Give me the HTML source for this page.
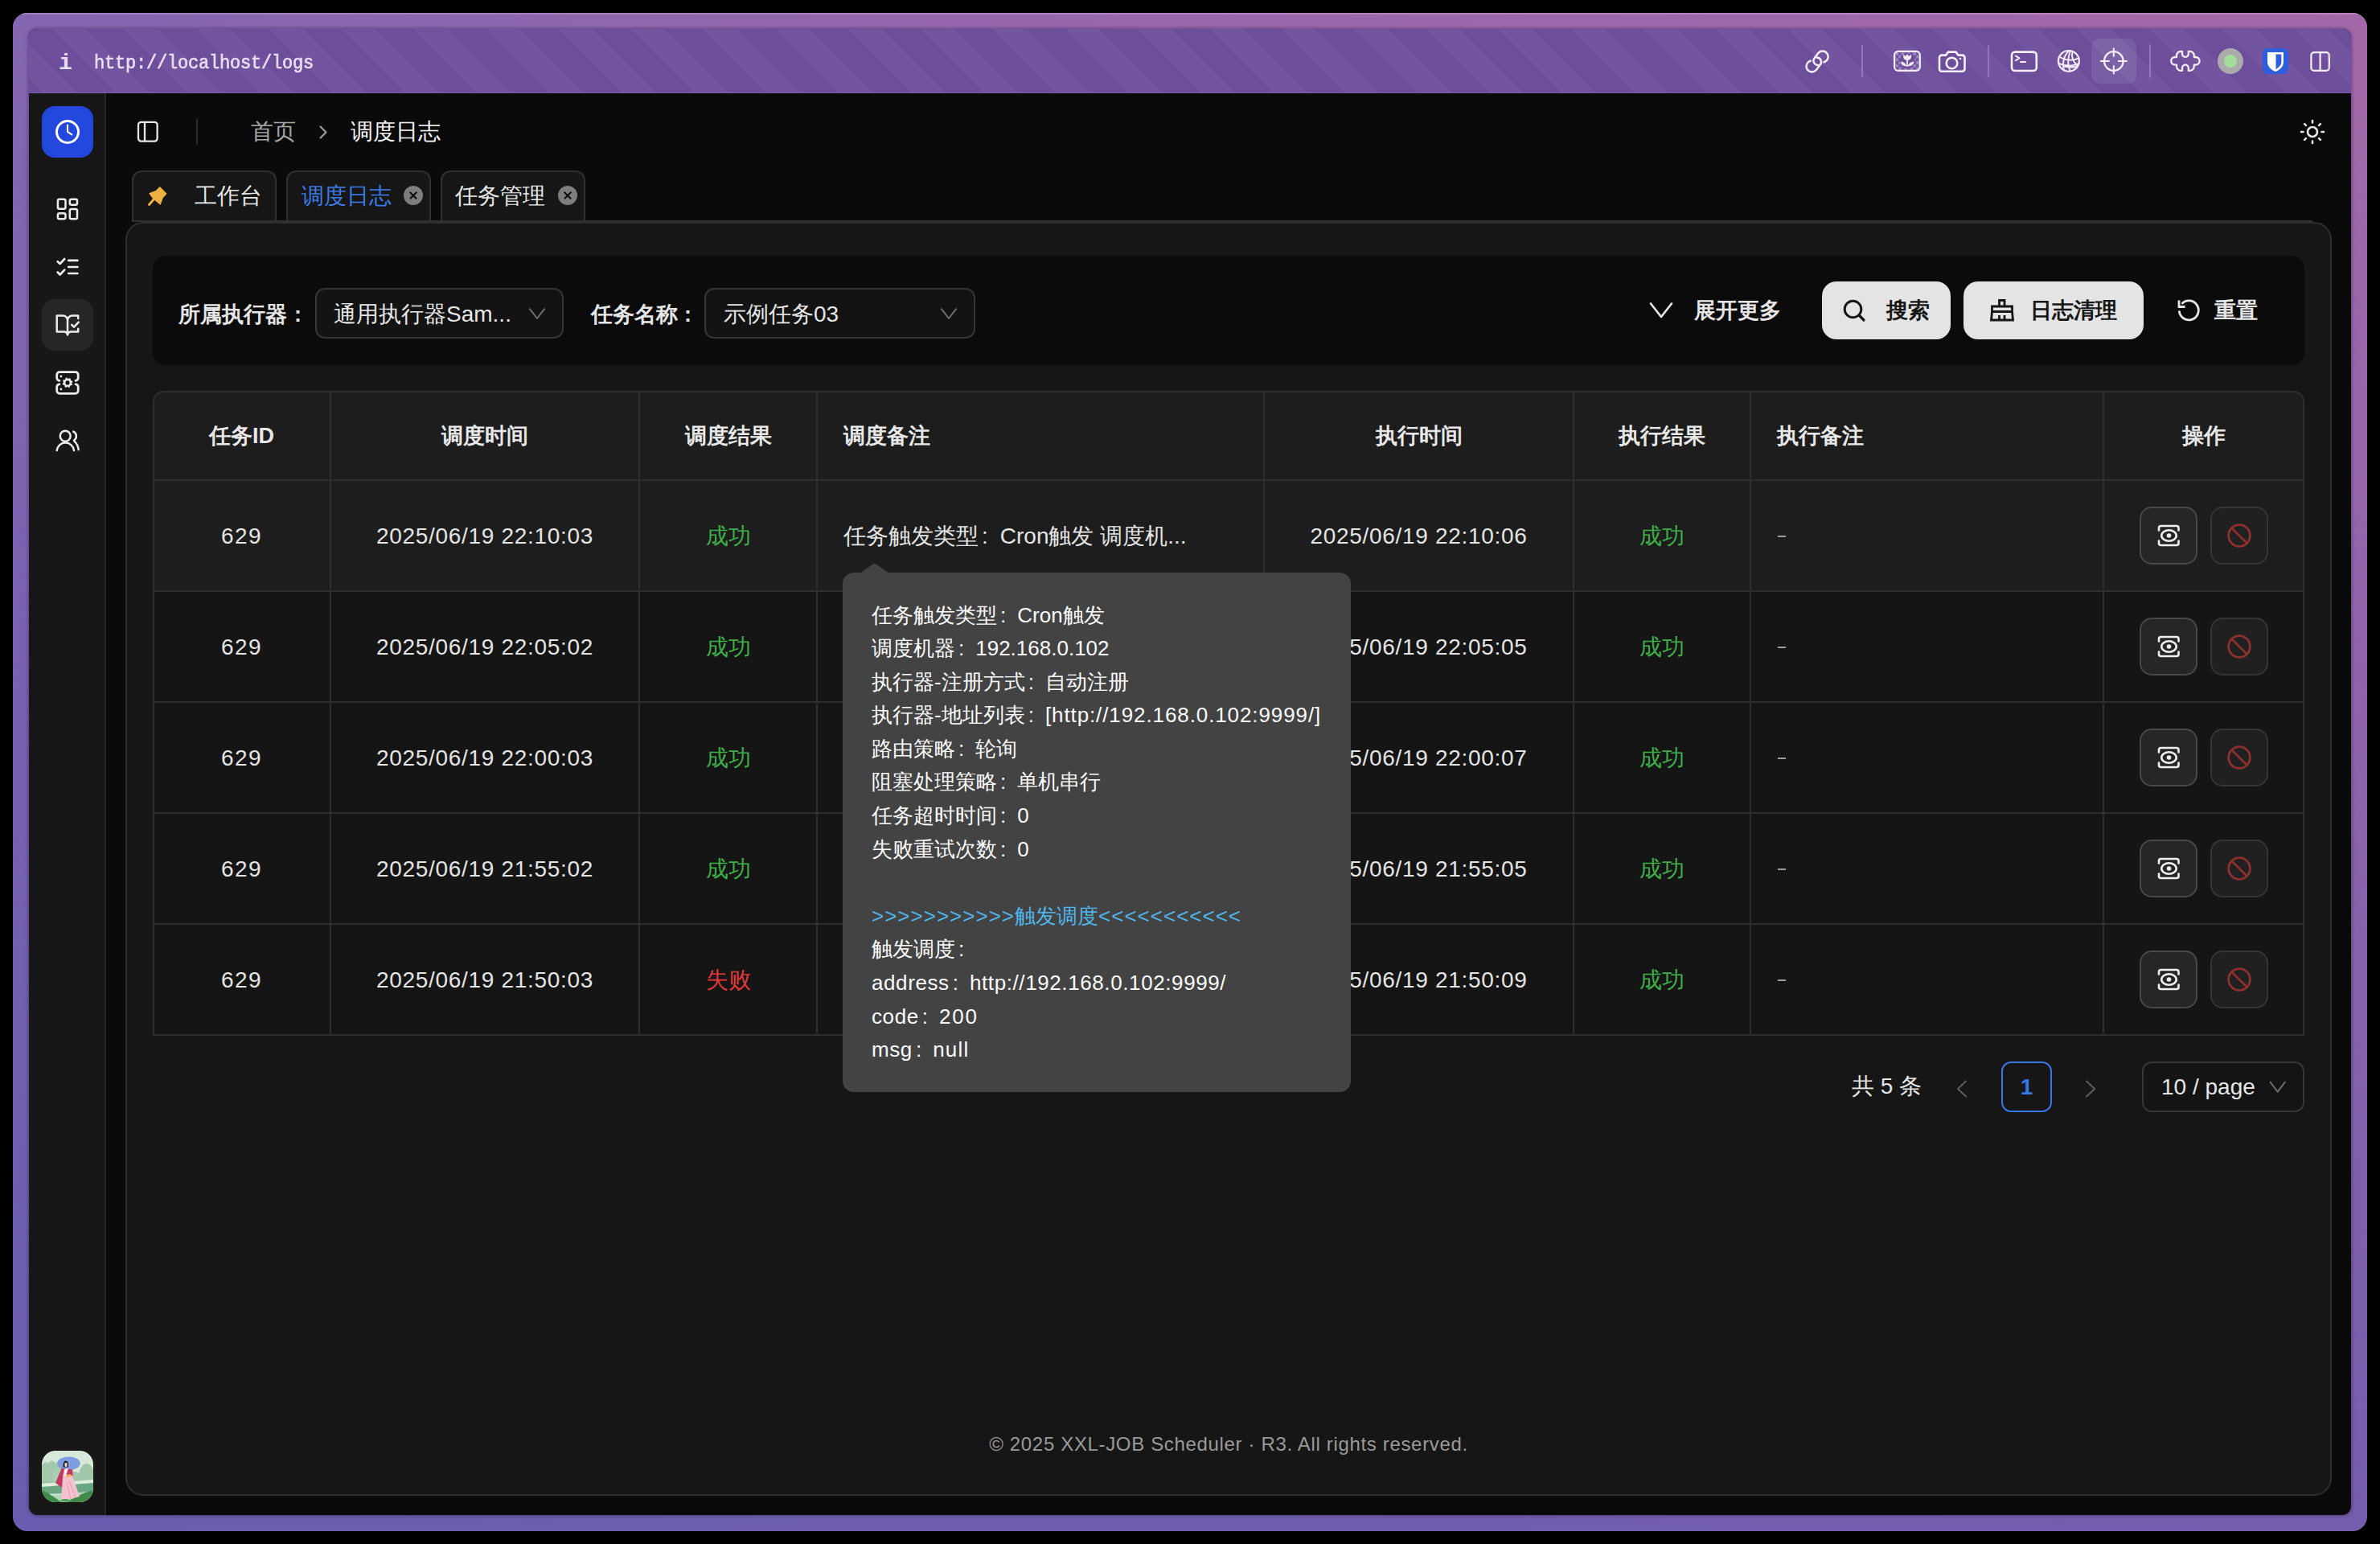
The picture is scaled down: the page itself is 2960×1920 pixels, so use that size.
<!DOCTYPE html>
<html><head><meta charset="utf-8">
<style>
*{box-sizing:border-box;margin:0;padding:0}
html,body{width:2960px;height:1920px;overflow:hidden;background:#000;font-family:"Liberation Sans",sans-serif;color:#e8e8e8}
.a{position:absolute}
#frame{left:16px;top:16px;width:2928px;height:1888px;border-radius:18px;background:linear-gradient(to right,#6a5db0,#755eae);overflow:hidden}
#frame::after{content:"";position:absolute;left:0;top:0;right:0;height:2px;border-radius:18px 18px 0 0;background:rgba(255,255,255,0.18)}
#frame::before{content:"";position:absolute;inset:0;background:linear-gradient(to right,#8466b0,#9a67ac 50%,#a468a9);-webkit-mask-image:linear-gradient(to bottom,#000,rgba(0,0,0,0));mask-image:linear-gradient(to bottom,#000,rgba(0,0,0,0))}
#win{left:0;top:0;width:2960px;height:1920px;clip-path:inset(36px 36px 36px 36px round 11px);background:#0a0a0a}
#title{left:36px;top:36px;width:2888px;height:80px;background:repeating-linear-gradient(45deg,#72549f 12.7px,#72549f 42.4px,#6c4e9b 42.4px,#6c4e9b 76.3px);border-bottom:1px solid #7a5dab}
.url{left:117px;top:59.5px;font-family:"Liberation Mono",monospace;font-size:22px;color:#e9def2;line-height:40px;letter-spacing:-0.2px;transform:scaleY(1.1);transform-origin:0 30px;-webkit-text-stroke:0.6px #e9def2}
.ii{left:73px;top:55px;font-family:"Liberation Mono",monospace;font-weight:bold;font-size:28px;color:#e9def2;line-height:48px}
#side{left:36px;top:116px;width:96px;height:1768px;background:#171717;border-right:2px solid #262626}
.logo{left:52px;top:132px;width:64px;height:64px;border-radius:16px;background:#2447dd}
.navbg{left:52px;top:372px;width:64px;height:64px;border-radius:16px;background:#262626}
.ico{position:absolute}
.card{left:156px;top:276px;width:2744px;height:1584px;border:2px solid #2e2e2e;border-radius:22px;background:#161616}
.tabline{left:164px;top:274px;width:2712px;height:2px;background:#303030}
.tab{top:212px;width:180px;height:64px;border:2px solid #303030;border-bottom:none;border-radius:12px 12px 0 0;background:#161616;font-size:27px;line-height:60px}
.filter{left:190px;top:318px;width:2676px;height:136px;border-radius:16px;background:#0b0b0b}
.lbl{font-size:27px;font-weight:bold;color:#e6e6e6;line-height:40px}
.sel{top:358px;height:63px;border:2px solid #363636;border-radius:12px;background:#131313;font-size:28px;line-height:62px;color:#e6e6e6}
.btn{top:350px;height:72px;border-radius:18px;background:#e4e4e4;color:#1a1a1a;font-size:27px;font-weight:bold;line-height:72px}
#tbl{left:190px;top:486px;width:2676px;height:802px;border:2px solid #2e2e2e;border-radius:14px 14px 0 0;overflow:hidden;background:#151515}
.th{top:0;height:110px;line-height:108px;font-size:27px;font-weight:bold;color:#e8e8e8;text-align:center}
.vl{top:0;width:2px;height:802px;background:#2e2e2e}
.hl{left:0;width:2676px;height:2px;background:#2e2e2e}
.td{height:138px;line-height:138px;font-size:28px;color:#e4e4e4;text-align:center}
.ok{color:#3fae49}.bad{color:#e0393a}
.opb{width:72px;height:72px;border-radius:15px;border:2px solid #484848;background:#262626}
.tip{left:1048px;top:712px;width:632px;height:646px;border-radius:14px;background:#434343;padding:32.5px 0 0 36px;font-size:26px;line-height:41.6px;color:#fafafa}
.foot{left:156px;top:1776px;width:2744px;text-align:center;font-size:24px;letter-spacing:0.66px;color:#9a9a9a;line-height:40px}

.avatar{left:52px;top:1804px;width:64px;height:64px;border-radius:16px;overflow:hidden;background:linear-gradient(#d5e8d5 0%,#b9d9c0 35%,#8fbf98 62%,#5f9f68 100%)}
.avatar div{position:absolute}
.av1{left:20px;top:6px;width:26px;height:12px;border-radius:13px 13px 2px 2px;background:#7d8fe0}
.av2{left:24px;top:14px;width:8px;height:10px;border-radius:4px;background:#2a2424}
.av3{left:18px;top:22px;width:26px;height:40px;border-radius:8px 8px 4px 4px;background:linear-gradient(90deg,#b8325e 0%,#e9a9bf 45%,#f3c6d3 70%,#c4426e 100%)}
.av4{left:0;top:48px;width:64px;height:16px;background:#3f8a48;opacity:.6}
.av5{left:26px;top:30px;width:14px;height:32px;background:#f5c8d4}
.crumb1{left:312px;top:144px;font-size:28px;line-height:40px;color:#a8a8a8}
.crumb2{left:436px;top:144px;font-size:28px;line-height:40px;color:#f4f4f4}
.tabtxt{top:224px;font-size:28px;line-height:40px;color:#e6e6e6}
.tclose{top:231px;width:24px;height:24px;border-radius:12px;background:#7d7d7d}
.tclose::before,.tclose::after{content:"";position:absolute;left:6px;top:11.2px;width:12px;height:1.6px;background:#0e0e0e;transform:rotate(45deg)}
.tclose::after{transform:rotate(-45deg)}

.dt{letter-spacing:0.7px}
.pg{font-size:28px;line-height:40px;color:#e6e6e6}
.pbox{left:2489px;top:1320px;width:63px;height:63px;border:2px solid #3577e5;border-radius:12px}
.psel{left:2664px;top:1320px;width:202px;height:63px;border:2px solid #363636;border-radius:12px;background:#141414}

.cl{margin:0 14px 0 4px}
.cl2{margin:0 15px 0 4px}
.lt{letter-spacing:0.6px}
.ar{letter-spacing:1px}
</style></head><body>
<div id="frame" class="a"></div>
<div class="a" style="left:36px;top:36px;width:2888px;height:1848px;border-radius:11px;box-shadow:0 0 4px 1px rgba(20,10,40,0.35)"></div>
<div id="win" class="a">
  <div id="title" class="a"></div>
  <div class="a ii">i</div>
  <div class="a url">http://localhost/logs</div>
  <svg class="a" style="left:0;top:0" width="2960" height="120" viewBox="0 0 2960 120" fill="none" stroke="#f4eefa" stroke-width="2.6" stroke-linecap="round" stroke-linejoin="round">
    <defs>
      <pattern id="chk" x="2357.4" y="64.9" width="7.3" height="7.5" patternUnits="userSpaceOnUse">
        <rect x="0.3" y="0.3" width="3.1" height="3.2" fill="#ad9dd0" stroke="none"/><rect x="3.95" y="4.05" width="3.1" height="3.2" fill="#ad9dd0" stroke="none"/>
      </pattern>
    </defs>
    <!-- link -->
    <path d="M2268.5 77.3 L2271.65 75.45 A7 7 0 0 0 2261.75 65.55 L2257.1 71.6 A5.5 5.5 0 0 0 2261 81" stroke-width="2.5"/>
    <path d="M2251.7 75.6 L2248.55 77.55 A7 7 0 0 0 2258.45 87.45 L2263.4 80.9 A5.5 5.5 0 0 0 2259.5 71.5" stroke-width="2.5"/>
    <line x1="2316" y1="57" x2="2316" y2="95" stroke="#8f78c2" stroke-width="2"/>
    <!-- image -->
    <rect x="2357.4" y="64.9" width="29.2" height="21.9" fill="url(#chk)" stroke="none" opacity="0.85"/>
    <ellipse cx="2372.1" cy="75.6" rx="9.6" ry="9.6" fill="#6c4e9b" stroke="none"/>
    <rect x="2356.1" y="63.9" width="31.7" height="23.9" rx="4.6" stroke-width="2.3"/>
    <path d="M2367.2 67.8 l2.5 2 l2.4 -2.2 l2.4 2.2 l2.5 -2 v3.2 a4.9 4 0 0 1 -9.8 0 z" fill="#f1ebf8" stroke="none"/>
    <rect x="2371.2" y="74" width="1.8" height="8.6" fill="#f1ebf8" stroke="none"/>
    <path d="M2371.4 82.4 C2370 78.2 2366.5 76.6 2363.8 76.9 C2364.4 80.2 2367 82.3 2371.4 82.4 z M2372.8 82.4 C2374.2 78.2 2377.7 76.6 2380.4 76.9 C2379.8 80.2 2377.2 82.3 2372.8 82.4 z" fill="#f1ebf8" stroke="none"/>
    <!-- camera -->
    <path d="M2415 68.6 h5 l3 -4 h9.5 l3 4 h5 a3 3 0 0 1 3 3 v14.2 a3 3 0 0 1 -3 3 h-25.5 a3 3 0 0 1 -3 -3 v-14.2 a3 3 0 0 1 3 -3z"/>
    <circle cx="2427.5" cy="78.5" r="6.8"/>
    <circle cx="2438" cy="73" r="1.3" fill="#f4eefa" stroke="none"/>
    <line x1="2473" y1="57" x2="2473" y2="95" stroke="#8f78c2" stroke-width="2"/>
    <!-- terminal -->
    <rect x="2502" y="64.6" width="30.8" height="23.4" rx="4"/>
    <path d="M2507 69.5 l4.5 2.8 l-4.5 2.8" stroke-width="2"/>
    <line x1="2513" y1="77" x2="2519" y2="77" stroke-width="2"/>
    <!-- globe -->
    <circle cx="2572.9" cy="75.9" r="12.9" stroke-width="2.2"/>
    <path d="M2573.2 63 C2569 67 2566 74 2566 80 C2566 83 2566.3 85 2566.8 87.5 M2575 63.3 C2573 68 2572 74 2572.3 80 C2572.5 83 2573.5 86 2574.8 88 M2577.6 64.3 C2576 70 2577 76 2584 82 M2561 70.5 C2566 73.5 2572 75 2578 74.5 C2580.5 74.2 2583 73.4 2585.5 72 M2560 78.5 C2564 80.5 2568 81.6 2574 81.7 C2578 81.6 2582 80.6 2585.5 78.8 M2567 82.5 C2572 83.5 2577 84 2582.5 83" stroke-width="1.9"/>
    <!-- crosshair -->
    <rect x="2601" y="48" width="56" height="56" rx="10" fill="rgba(255,255,255,0.09)" stroke="none"/>
    <circle cx="2628.8" cy="76" r="11.8" stroke-width="2.3"/>
    <path d="M2628.8 60.5 v9.5 M2628.8 82 v9.5 M2612.8 76 h10 M2634.8 76 h10" stroke-width="2.1"/>
    <line x1="2674" y1="56" x2="2674" y2="96" stroke="#8f78c2" stroke-width="2"/>
    <!-- puzzle -->
    <path d="M2707 71 V69.3 A5.5 5.5 0 0 1 2712.5 63.8 H2714 V66.9 A3.9 3.9 0 0 0 2721.8 66.9 V63.8 H2723.3 A5.5 5.5 0 0 1 2728.8 69.3 V71 H2730.8 A4.8 4.8 0 0 1 2730.8 80.6 H2728.8 V82.4 A5.5 5.5 0 0 1 2723.3 87.9 H2721.8 V84.5 A3.9 3.9 0 0 0 2714 84.5 V87.9 H2712.5 A5.5 5.5 0 0 1 2707 82.4 V80.6 H2705 A4.8 4.8 0 0 1 2705 71 Z" stroke-width="2.3"/>
    <circle cx="2774" cy="76" r="16" fill="#ababab" stroke="none"/>
    <circle cx="2774" cy="76" r="8" fill="#a4dc9b" stroke="none"/>
    <!-- bitwarden -->
    <rect x="2814" y="60" width="32" height="32" rx="6" fill="#2d5fdc" stroke="none"/>
    <path d="M2820 65 h20 v12 c0 6 -5 10 -10 12 c-5 -2 -10 -6 -10 -12z" fill="#fff" stroke="none"/>
    <path d="M2830.5 67.5 h6.8 v9.5 c0 4 -3 7 -6.8 9z" fill="#2d5fdc" stroke="none"/>
    <!-- split -->
    <rect x="2874.4" y="65.2" width="22.4" height="22.6" rx="3.6" stroke-width="2.2"/>
    <line x1="2885.6" y1="65.5" x2="2885.6" y2="87.5" stroke-width="2.2"/>
  </svg>

  <div id="side" class="a"></div>
  <div class="a logo"></div>
  <div class="a navbg"></div>

  <svg class="a" style="left:0;top:116px" width="140" height="1768" viewBox="0 116 140 1768" fill="none" stroke="#ececec" stroke-width="2.5" stroke-linecap="round" stroke-linejoin="round">
    <circle cx="84" cy="164" r="13.5" stroke="#fff" stroke-width="3"/>
    <path d="M84 155.5 v8.3 l5.3 3.6" stroke="#fff" stroke-width="2.1"/>
    <rect x="71.9" y="247.7" width="9.6" height="12.1" rx="2"/>
    <rect x="71.9" y="265.2" width="9.6" height="7" rx="2"/>
    <rect x="86.8" y="247.7" width="9.2" height="7" rx="2"/>
    <rect x="86.8" y="260" width="9.2" height="12.2" rx="2"/>
    <path d="M71.7 325.2 l2.9 2.9 l5.6 -6.1 M71.7 338.5 l2.9 3.1 l5.6 -6 M85.2 323.9 h11.2 M85.2 332 h11.2 M85.2 340 h11.2" stroke-width="2.7"/>
    <path d="M70.7 392.5 h7.5 a5.8 5.8 0 0 1 5.8 5.8 v18.2 a4.8 4.8 0 0 0 -4.8 -4 h-8.5 z M84 398.5 a6 6 0 0 1 6 -6 h7.2 v3.6 M97.2 408.8 v3.7 h-8.4 a4.8 4.8 0 0 0 -4.8 4" />
    <path d="M89.2 403.8 l2.8 2.8 l5.7 -5.9" stroke-width="2.6"/>
    <path d="M73.9 473.3 A3.2 3.2 0 0 1 70.7 470.1 V466 A3.4 3.4 0 0 1 74.1 462.6 H93.8 A3.4 3.4 0 0 1 97.2 466 V470.1 A3.2 3.2 0 0 1 94 473.3 M73.9 477.8 A3.2 3.2 0 0 0 70.7 481 V485.9 A3.4 3.4 0 0 0 74.1 489.3 H93.8 A3.4 3.4 0 0 0 97.2 485.9 V481 A3.2 3.2 0 0 0 94 477.8" stroke-width="2.8"/>
    <circle cx="75.9" cy="468" r="1.4" fill="#ececec" stroke="none"/><circle cx="75.9" cy="484" r="1.4" fill="#ececec" stroke="none"/>
    <circle cx="84" cy="475.9" r="3.9" stroke-width="2.6"/>
    <circle cx="84" cy="475.9" r="5.3" stroke-width="2" stroke-dasharray="2.1 2.06" stroke-linecap="butt" transform="rotate(12 84 475.9)"/>
    <circle cx="81.2" cy="542.3" r="6.45"/>
    <path d="M70.7 560.2 A10.7 10.7 0 0 1 92 560.2 M91.2 536.6 A6.3 6.3 0 0 1 92 547.6 M92.4 548.6 C95 551 97.3 555 97.6 559.2"/>
  </svg>
  <svg class="a" style="left:52px;top:1804px" width="64" height="64" viewBox="0 0 64 64">
    <defs><clipPath id="avc"><rect x="0" y="0" width="64" height="64" rx="17"/></clipPath></defs>
    <g clip-path="url(#avc)">
      <rect x="0" y="0" width="64" height="64" fill="#d7e9d8"/>
      <path d="M0 18 c2 -4 6 -5 8 -2 c1 -4 7 -5 9 0 c2 -3 6 -2 8 2 v20 h-25z" fill="#a3c9ad"/>
      <path d="M14 24 c2 -4 8 -4 10 0 v16 h-10z" fill="#a9ceb3"/>
      <path d="M36 28 c3 -3 8 -3 10 1 c1 -6 4 -12 9 -13 c5 0 8 4 9 8 v16 h-28z" fill="#a0c7aa"/>
      <path d="M0 38 h64 v-2 l-64 5z" fill="#9cc4a6"/>
      <path d="M0 41 L64 36 V40 L0 45z" fill="#dcefdf"/>
      <path d="M0 45 L64 40 V52 L0 54z" fill="#6aa683"/>
      <path d="M10 56 L64 50 V64 H10z" fill="#b4d6bc"/>
      <path d="M0 49 C8 52 16 58 24 64 H0z" fill="#3f8a49"/>
      <path d="M64 49 C52 52 40 58 31 64 H64z" fill="#3f8a49"/>
      <path d="M22 63 c2 -3 6 -4 10 -3 c3 1 3 3 2 4z" fill="#5aa065"/>
      <ellipse cx="33.5" cy="15.8" rx="14.3" ry="8.4" fill="#7f9de0"/>
      <path d="M26.6 20.5 c-0.5 -5 1 -8 3.2 -8 c2.3 0 3.6 3 3.1 8z" fill="#231e22"/>
      <rect x="28.5" y="15" width="3" height="5" rx="1.2" fill="#f0d3c9"/>
      <path d="M24.5 22 L38 23.3 L39.5 43 L24 45.5 L17 40 Z" fill="#c23a63"/>
      <path d="M26.4 29 L38 30.8 L47 57 L36 60 L24 59.7 Z" fill="#f4c2cf"/>
      <path d="M28 23 L33 22 L30 31 L27 30z" fill="#fbeef0"/>
      <path d="M31 30 l5 -1 l0 3 l-5 1z" fill="#f1b53e"/>
      <path d="M31 40 L36 60 M34 38 L42 58" stroke="#e890a8" stroke-width="0.8"/>
    </g>
  </svg>

  <svg class="a" style="left:140px;top:120px" width="2820" height="160" viewBox="140 120 2820 160" fill="none" stroke="#e6e6e6" stroke-width="2.6" stroke-linecap="round" stroke-linejoin="round">
    <rect x="172" y="151.8" width="23.6" height="23.8" rx="3.5" stroke-width="2.3"/>
    <line x1="180" y1="152" x2="180" y2="175.5" stroke-width="2.3"/>
    <line x1="245" y1="148" x2="245" y2="179" stroke="#2c2c2c" stroke-width="2"/>
    <path d="M398.5 157.5 l7 7 l-7 7" stroke="#9c9c9c" stroke-width="2.2"/>
    <circle cx="2876" cy="164" r="6" stroke-width="2.6"/>
    <path d="M2876 150 v2.5 M2876 175.5 v2.5 M2862 164 h2.5 M2887.5 164 h2.5 M2866.1 154.1 l1.8 1.8 M2884.1 172.1 l1.8 1.8 M2866.1 173.9 l1.8 -1.8 M2884.1 155.9 l1.8 -1.8" stroke-width="2.6"/>
  </svg>
  <div class="a crumb1">首页</div>
  <div class="a crumb2">调度日志</div>

  <div class="a tab" style="left:164px"></div>
  <div class="a tab" style="left:356px;height:66px;background:#161616"></div>
  <div class="a tab" style="left:548px"></div>
  <div class="a tabtxt" style="left:242px">工作台</div>
  <div class="a tabtxt" style="left:375px;color:#3b7be3">调度日志</div>
  <div class="a tabtxt" style="left:566px">任务管理</div>
  <div class="a tclose" style="left:502px"></div>
  <div class="a tclose" style="left:694px"></div>
  <svg class="a" style="left:180px;top:228px" width="32" height="32" viewBox="180 228 32 32" fill="none" stroke-linecap="round" stroke-linejoin="round">
    <path d="M198.9 232.8 L206.8 240.8 L202.2 245.8 L199.3 254 L192.8 248.5 L190.8 246.8 L186 240.6 L193.9 237.6 Z" fill="#efb043" stroke="#efb043" stroke-width="1.2"/>
    <path d="M191.5 247.5 L185.5 254.5" stroke="#efb043" stroke-width="2.8"/>
  </svg>

  <div class="a tabline"></div>
  <div class="a card"></div>
  <div class="a filter"></div>

  <div class="a lbl" style="left:222px;top:371px">所属执行器<span style="margin-left:9px">:</span></div>
  <div class="a sel" style="left:392px;width:309px"><span style="position:absolute;left:21px;top:0">通用执行器Sam...</span></div>
  <div class="a lbl" style="left:735px;top:371px">任务名称<span style="margin-left:8px">:</span></div>
  <div class="a sel" style="left:876px;width:337px"><span style="position:absolute;left:22px;top:0">示例任务03</span></div>
  <div class="a lbl" style="left:2107px;top:366px">展开更多</div>
  <div class="a btn" style="left:2266px;width:160px"></div>
  <div class="a btn" style="left:2442px;width:224px"></div>
  <div class="a lbl" style="left:2346px;top:366px;color:#161616">搜索</div>
  <div class="a lbl" style="left:2525px;top:366px;color:#161616">日志清理</div>
  <div class="a lbl" style="left:2754px;top:366px">重置</div>
  <svg class="a" style="left:190px;top:318px" width="2676" height="136" viewBox="190 318 2676 136" fill="none" stroke-linecap="round" stroke-linejoin="round">
    <path d="M658.8 384.2 l9.2 11.8 l9.2 -11.8" stroke="#6e6e6e" stroke-width="2"/>
    <path d="M1170.8 384.2 l9.2 11.8 l9.2 -11.8" stroke="#6e6e6e" stroke-width="2"/>
    <path d="M2053 377.5 l13 16.5 l13 -16.5" stroke="#e8e8e8" stroke-width="2.6"/>
    <circle cx="2304.5" cy="384.5" r="10.3" stroke="#161616" stroke-width="3"/>
    <path d="M2312.5 392.5 l5.5 5.5" stroke="#161616" stroke-width="3.2"/>
    <path d="M2486.5 381 v-7.5 h6.5 v7.5 M2477.5 381 h25 v6.5 h-25z M2477.5 387.5 l-1 10.5 h27 l-1 -10.5 M2486.5 398 v-6 M2493 398 v-6" stroke="#161616" stroke-width="2.8" stroke-linejoin="miter" stroke-linecap="butt"/>
    <path d="M2710.3 386.5 a12 12 0 1 0 3.2 -8.8" stroke="#e8e8e8" stroke-width="2.8" stroke-linecap="butt"/>
    <path d="M2710 373.5 v8 h7.5" stroke="#e8e8e8" stroke-width="2.8" stroke-linecap="butt" stroke-linejoin="miter"/>
  </svg>
<div id="tbl" class="a">
  <div class="a" style="left:0;top:0;width:2676px;height:248px;background:#1d1d1d"></div>
  <div class="a th" style="left:-2px;width:221px">任务ID</div>
  <div class="a th" style="left:219px;width:384px">调度时间</div>
  <div class="a th" style="left:603px;width:221px">调度结果</div>
  <div class="a th" style="left:857px;width:523px;text-align:left">调度备注</div>
  <div class="a th" style="left:1380px;width:385px">执行时间</div>
  <div class="a th" style="left:1765px;width:220px">执行结果</div>
  <div class="a th" style="left:2018px;width:406px;text-align:left">执行备注</div>
  <div class="a th" style="left:2424px;width:249px">操作</div>
  <div class="a vl" style="left:218px"></div>
  <div class="a vl" style="left:602px"></div>
  <div class="a vl" style="left:823px"></div>
  <div class="a vl" style="left:1379px"></div>
  <div class="a vl" style="left:1764px"></div>
  <div class="a vl" style="left:1984px"></div>
  <div class="a vl" style="left:2423px"></div>
  <div class="a hl" style="top:108px"></div>
  <div class="a td " style="left:-2px;width:221px;top:110px"><span style="letter-spacing:1.5px">629</span></div>
  <div class="a td dt" style="left:219px;width:384px;top:110px">2025/06/19 22:10:03</div>
  <div class="a td ok" style="left:603px;width:221px;top:110px">成功</div>
  <div class="a td" style="left:857px;width:520px;top:110px;text-align:left">任务触发类型<span class="cl2">:</span>Cron触发 调度机...</div>
  <div class="a td dt" style="left:1380px;width:385px;top:110px">2025/06/19 22:10:06</div>
  <div class="a td ok" style="left:1765px;width:220px;top:110px">成功</div>
  <div class="a" style="left:2019px;top:177.7px;width:10px;height:2.6px;background:#9c9c9c"></div>
  <div class="a opb" style="left:2469px;top:142px"></div>
  <div class="a opb" style="left:2557px;top:142px;border-color:#353535;background:#202020"></div>
  <svg class="a" style="left:2469px;top:142px" width="160" height="72" viewBox="2661 630 160 72" fill="none" stroke-linecap="round" stroke-linejoin="round">
    <path d="M2685 659.5 v-3 a2.5 2.5 0 0 1 2.5 -2.5 h19.5 a2.5 2.5 0 0 1 2.5 2.5 v3 M2685 672.5 v3 a2.5 2.5 0 0 0 2.5 2.5 h19.5 a2.5 2.5 0 0 0 2.5 -2.5 v-3" transform="translate(0 0)" stroke="#efefef" stroke-width="2.6"/>
    <ellipse cx="2697.5" cy="666" rx="9.2" ry="6.8" stroke="#efefef" stroke-width="2.6"/>
    <circle cx="2697.5" cy="666" r="2.8" fill="#efefef"/>
    <circle cx="2785" cy="666" r="13.4" stroke="#8c2f2f" stroke-width="2.8"/>
    <path d="M2775.5 656.5 l19 19" stroke="#8c2f2f" stroke-width="2.8"/>
  </svg>
  <div class="a hl" style="top:246px"></div>
  <div class="a td " style="left:-2px;width:221px;top:248px"><span style="letter-spacing:1.5px">629</span></div>
  <div class="a td dt" style="left:219px;width:384px;top:248px">2025/06/19 22:05:02</div>
  <div class="a td ok" style="left:603px;width:221px;top:248px">成功</div>
  <div class="a td dt" style="left:1380px;width:385px;top:248px">2025/06/19 22:05:05</div>
  <div class="a td ok" style="left:1765px;width:220px;top:248px">成功</div>
  <div class="a" style="left:2019px;top:315.7px;width:10px;height:2.6px;background:#9c9c9c"></div>
  <div class="a opb" style="left:2469px;top:280px"></div>
  <div class="a opb" style="left:2557px;top:280px;border-color:#353535;background:#202020"></div>
  <svg class="a" style="left:2469px;top:280px" width="160" height="72" viewBox="2661 768 160 72" fill="none" stroke-linecap="round" stroke-linejoin="round">
    <path d="M2685 659.5 v-3 a2.5 2.5 0 0 1 2.5 -2.5 h19.5 a2.5 2.5 0 0 1 2.5 2.5 v3 M2685 672.5 v3 a2.5 2.5 0 0 0 2.5 2.5 h19.5 a2.5 2.5 0 0 0 2.5 -2.5 v-3" transform="translate(0 138)" stroke="#efefef" stroke-width="2.6"/>
    <ellipse cx="2697.5" cy="804" rx="9.2" ry="6.8" stroke="#efefef" stroke-width="2.6"/>
    <circle cx="2697.5" cy="804" r="2.8" fill="#efefef"/>
    <circle cx="2785" cy="804" r="13.4" stroke="#8c2f2f" stroke-width="2.8"/>
    <path d="M2775.5 794.5 l19 19" stroke="#8c2f2f" stroke-width="2.8"/>
  </svg>
  <div class="a hl" style="top:384px"></div>
  <div class="a td " style="left:-2px;width:221px;top:386px"><span style="letter-spacing:1.5px">629</span></div>
  <div class="a td dt" style="left:219px;width:384px;top:386px">2025/06/19 22:00:03</div>
  <div class="a td ok" style="left:603px;width:221px;top:386px">成功</div>
  <div class="a td dt" style="left:1380px;width:385px;top:386px">2025/06/19 22:00:07</div>
  <div class="a td ok" style="left:1765px;width:220px;top:386px">成功</div>
  <div class="a" style="left:2019px;top:453.7px;width:10px;height:2.6px;background:#9c9c9c"></div>
  <div class="a opb" style="left:2469px;top:418px"></div>
  <div class="a opb" style="left:2557px;top:418px;border-color:#353535;background:#202020"></div>
  <svg class="a" style="left:2469px;top:418px" width="160" height="72" viewBox="2661 906 160 72" fill="none" stroke-linecap="round" stroke-linejoin="round">
    <path d="M2685 659.5 v-3 a2.5 2.5 0 0 1 2.5 -2.5 h19.5 a2.5 2.5 0 0 1 2.5 2.5 v3 M2685 672.5 v3 a2.5 2.5 0 0 0 2.5 2.5 h19.5 a2.5 2.5 0 0 0 2.5 -2.5 v-3" transform="translate(0 276)" stroke="#efefef" stroke-width="2.6"/>
    <ellipse cx="2697.5" cy="942" rx="9.2" ry="6.8" stroke="#efefef" stroke-width="2.6"/>
    <circle cx="2697.5" cy="942" r="2.8" fill="#efefef"/>
    <circle cx="2785" cy="942" r="13.4" stroke="#8c2f2f" stroke-width="2.8"/>
    <path d="M2775.5 932.5 l19 19" stroke="#8c2f2f" stroke-width="2.8"/>
  </svg>
  <div class="a hl" style="top:522px"></div>
  <div class="a td " style="left:-2px;width:221px;top:524px"><span style="letter-spacing:1.5px">629</span></div>
  <div class="a td dt" style="left:219px;width:384px;top:524px">2025/06/19 21:55:02</div>
  <div class="a td ok" style="left:603px;width:221px;top:524px">成功</div>
  <div class="a td dt" style="left:1380px;width:385px;top:524px">2025/06/19 21:55:05</div>
  <div class="a td ok" style="left:1765px;width:220px;top:524px">成功</div>
  <div class="a" style="left:2019px;top:591.7px;width:10px;height:2.6px;background:#9c9c9c"></div>
  <div class="a opb" style="left:2469px;top:556px"></div>
  <div class="a opb" style="left:2557px;top:556px;border-color:#353535;background:#202020"></div>
  <svg class="a" style="left:2469px;top:556px" width="160" height="72" viewBox="2661 1044 160 72" fill="none" stroke-linecap="round" stroke-linejoin="round">
    <path d="M2685 659.5 v-3 a2.5 2.5 0 0 1 2.5 -2.5 h19.5 a2.5 2.5 0 0 1 2.5 2.5 v3 M2685 672.5 v3 a2.5 2.5 0 0 0 2.5 2.5 h19.5 a2.5 2.5 0 0 0 2.5 -2.5 v-3" transform="translate(0 414)" stroke="#efefef" stroke-width="2.6"/>
    <ellipse cx="2697.5" cy="1080" rx="9.2" ry="6.8" stroke="#efefef" stroke-width="2.6"/>
    <circle cx="2697.5" cy="1080" r="2.8" fill="#efefef"/>
    <circle cx="2785" cy="1080" r="13.4" stroke="#8c2f2f" stroke-width="2.8"/>
    <path d="M2775.5 1070.5 l19 19" stroke="#8c2f2f" stroke-width="2.8"/>
  </svg>
  <div class="a hl" style="top:660px"></div>
  <div class="a td " style="left:-2px;width:221px;top:662px"><span style="letter-spacing:1.5px">629</span></div>
  <div class="a td dt" style="left:219px;width:384px;top:662px">2025/06/19 21:50:03</div>
  <div class="a td bad" style="left:603px;width:221px;top:662px">失败</div>
  <div class="a td dt" style="left:1380px;width:385px;top:662px">2025/06/19 21:50:09</div>
  <div class="a td ok" style="left:1765px;width:220px;top:662px">成功</div>
  <div class="a" style="left:2019px;top:729.7px;width:10px;height:2.6px;background:#9c9c9c"></div>
  <div class="a opb" style="left:2469px;top:694px"></div>
  <div class="a opb" style="left:2557px;top:694px;border-color:#353535;background:#202020"></div>
  <svg class="a" style="left:2469px;top:694px" width="160" height="72" viewBox="2661 1182 160 72" fill="none" stroke-linecap="round" stroke-linejoin="round">
    <path d="M2685 659.5 v-3 a2.5 2.5 0 0 1 2.5 -2.5 h19.5 a2.5 2.5 0 0 1 2.5 2.5 v3 M2685 672.5 v3 a2.5 2.5 0 0 0 2.5 2.5 h19.5 a2.5 2.5 0 0 0 2.5 -2.5 v-3" transform="translate(0 552)" stroke="#efefef" stroke-width="2.6"/>
    <ellipse cx="2697.5" cy="1218" rx="9.2" ry="6.8" stroke="#efefef" stroke-width="2.6"/>
    <circle cx="2697.5" cy="1218" r="2.8" fill="#efefef"/>
    <circle cx="2785" cy="1218" r="13.4" stroke="#8c2f2f" stroke-width="2.8"/>
    <path d="M2775.5 1208.5 l19 19" stroke="#8c2f2f" stroke-width="2.8"/>
  </svg>
</div>
  <svg class="a" style="left:1066px;top:696px" width="42" height="18" viewBox="1066 696 42 18"><path d="M1070 712.5 L1084.5 702.2 Q1087.7 700 1090.9 702.2 L1105 712.5 Z" fill="#434343"/></svg>
  <div class="a tip">任务触发类型<span class="cl">:</span>Cron触发<br>调度机器<span class="cl">:</span>192.168.0.102<br>执行器-注册方式<span class="cl">:</span>自动注册<br>执行器-地址列表<span class="cl">:</span><span class="lt" style="letter-spacing:0.9px">[http://192.168.0.102:9999/]</span><br>路由策略<span class="cl">:</span>轮询<br>阻塞处理策略<span class="cl">:</span>单机串行<br>任务超时时间<span class="cl">:</span>0<br>失败重试次数<span class="cl">:</span>0<br><br><span style="color:#4fb6ea"><span class="ar">&gt;&gt;&gt;&gt;&gt;&gt;&gt;&gt;&gt;&gt;&gt;</span>触发调度<span class="ar">&lt;&lt;&lt;&lt;&lt;&lt;&lt;&lt;&lt;&lt;&lt;</span></span><br>触发调度<span class="cl">:</span><br><span class="lt">address</span><span class="cl">:</span><span class="lt">http://192.168.0.102:9999/</span><br><span class="lt">code</span><span class="cl">:</span><span class="lt" style="letter-spacing:1.8px">200</span><br><span class="lt">msg</span><span class="cl">:</span><span class="lt" style="letter-spacing:1.2px">null</span></div>
  <div class="a pg" style="left:2303px;top:1331px">共 5 条</div>
  <div class="a pbox"></div>
  <div class="a pg" style="left:2489px;top:1332px;width:63px;text-align:center;color:#3577e5;font-weight:bold">1</div>
  <div class="a psel"></div>
  <div class="a pg" style="left:2688px;top:1332px">10 / page</div>
  <svg class="a" style="left:2420px;top:1330px" width="440" height="40" viewBox="2420 1330 440 40" fill="none" stroke-linecap="round" stroke-linejoin="round">
    <path d="M2445 1344.5 l-10 9.5 l10 9.5" stroke="#5a5a5a" stroke-width="2.2"/>
    <path d="M2595 1344.5 l10 9.5 l-10 9.5" stroke="#5a5a5a" stroke-width="2.2"/>
    <path d="M2823.5 1345.5 l9.2 12.2 l9.2 -12.2" stroke="#6e6e6e" stroke-width="2"/>
  </svg>
  <div class="a foot">© 2025 XXL-JOB Scheduler · R3. All rights reserved.</div>
</div>
</body></html>
